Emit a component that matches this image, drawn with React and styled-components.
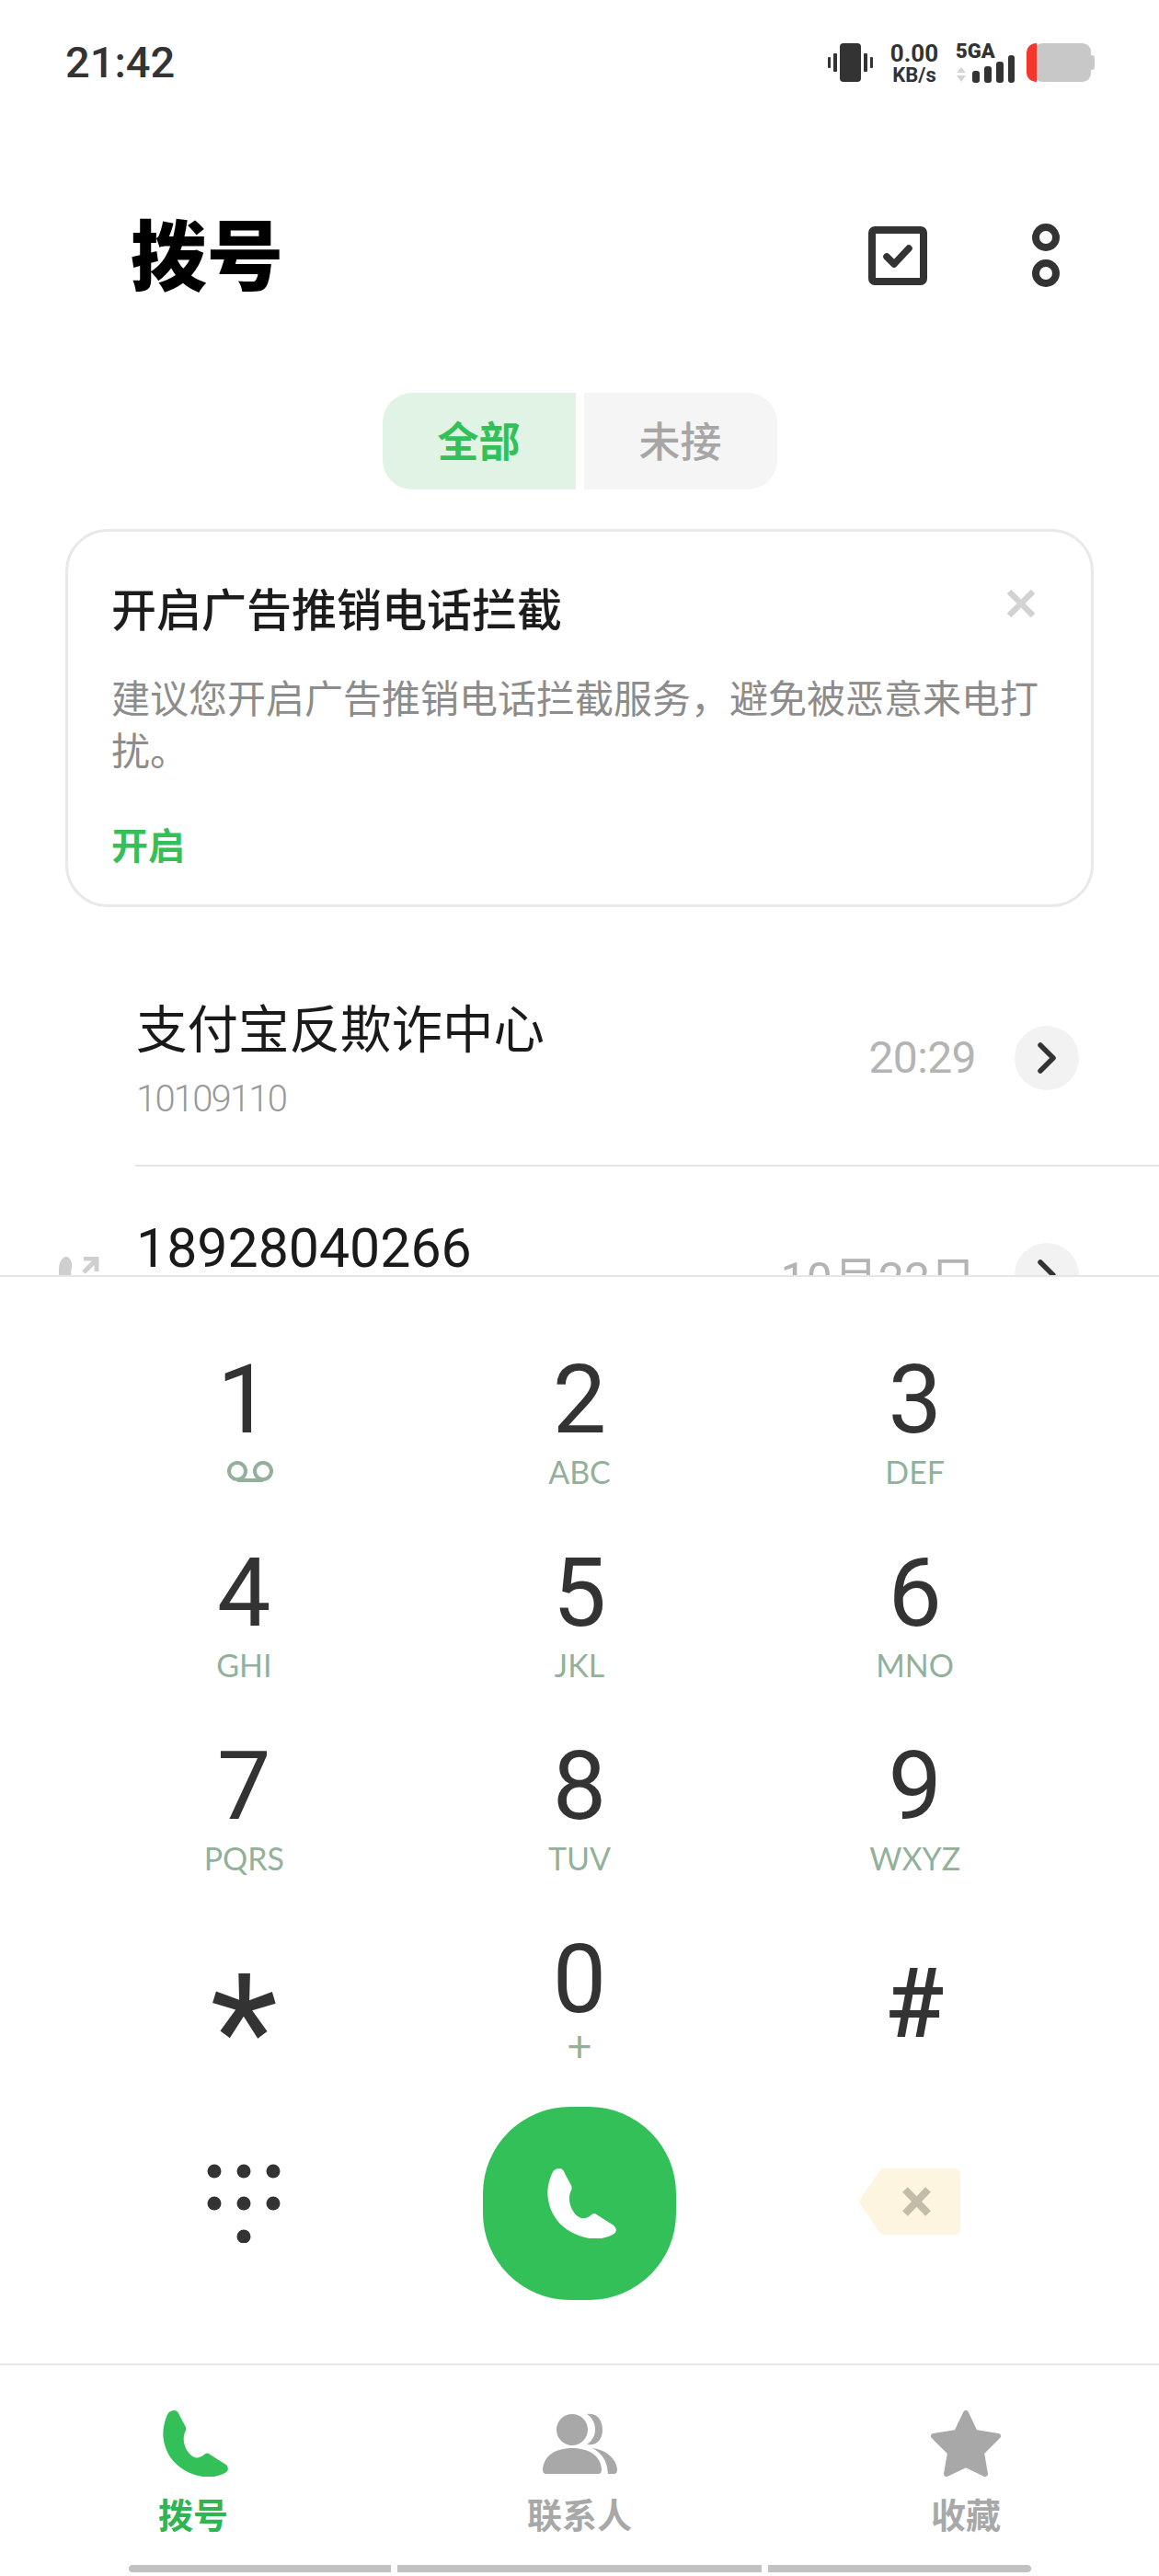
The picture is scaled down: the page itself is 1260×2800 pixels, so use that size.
import React from 'react';
import styled, { createGlobalStyle } from 'styled-components';

const GlobalStyle = createGlobalStyle`
  html, body {
    margin: 0;
    padding: 0;
    background: #fff;
  }
  body {
    font-family: 'Roboto', 'Noto Sans CJK SC', sans-serif;
  }
`;

const Page = styled.div`
  width: 1260px;
  height: 2800px;
  display: flex;
  flex-direction: column;
  overflow: hidden;
  background: #fff;
`;

const StatusBar = styled.div`
  height: 136px;
  flex: none;
  display: flex;
  justify-content: space-between;
  align-items: flex-start;
  padding: 47px 70px 0 71px;
  box-sizing: border-box;
`;

const Clock = styled.div`
  font-size: 47px;
  line-height: 42px;
  font-weight: 500;
  color: #333;
`;

const StatusIcons = styled.div`
  display: flex;
  align-items: flex-start;
`;

const Speed = styled.div`
  display: flex;
  flex-direction: column;
  align-items: center;
  margin: 0 18px;
  width: 54px;
  color: #333;
  font-weight: 700;
`;

const SpeedValue = styled.span`
  font-size: 26px;
  line-height: 22px;
`;

const SpeedUnit = styled.span`
  font-size: 22px;
  line-height: 20px;
  margin-top: 3px;
  white-space: nowrap;
`;

const Network = styled.div`
  display: flex;
  flex-direction: column;
  width: 64px;
  margin-right: 13px;
`;

const NetworkLabel = styled.span`
  font-size: 22px;
  line-height: 18px;
  font-weight: 900;
  color: #333;
  margin-bottom: -5px;
`;

const Header = styled.div`
  height: 120px;
  margin-top: 82px;
  flex: none;
  display: flex;
  align-items: center;
  justify-content: space-between;
  padding: 0 108px 0 142px;
`;

const Title = styled.h1`
  margin: 6px 0 0;
  font-size: 83px;
  line-height: 120px;
  font-weight: 900;
  color: #000;
`;

const HeaderActions = styled.div`
  display: flex;
  align-items: center;
  gap: 114px;
`;

const Tabs = styled.div`
  margin: 89px auto 0;
  display: flex;
  gap: 9px;
  flex: none;
`;

const Tab = styled.div`
  width: 210px;
  height: 105px;
  padding-bottom: 5px;
  display: flex;
  align-items: center;
  justify-content: center;
  box-sizing: border-box;
  font-size: 45px;
  background: ${p => (p.$active ? '#e0f3e5' : '#f5f5f5')};
  color: ${p => (p.$active ? '#34c059' : '#a6a6a6')};
  font-weight: ${p => (p.$active ? 700 : 500)};
  border-radius: ${p => (p.$active ? '32px 0 0 32px' : '0 32px 32px 0')};
`;

const Card = styled.section`
  margin: 43px 71px 0;
  height: 411px;
  flex: none;
  box-sizing: border-box;
  border: 3px solid #e9e9e9;
  border-radius: 46px;
  padding: 54px 60px 0 47px;
`;

const CardHead = styled.div`
  display: flex;
  justify-content: space-between;
  align-items: flex-start;
`;

const CardTitle = styled.div`
  font-size: 49px;
  line-height: 66px;
  font-weight: 500;
  color: #1c1c1c;
`;

const CloseSlot = styled.div`
  margin-top: 8px;
`;

const CardText = styled.p`
  margin: 34px -12px 0 0;
  font-size: 42px;
  line-height: 57px;
  color: #8c8c8c;
`;

const CardAction = styled.div`
  margin-top: 47px;
  font-size: 40px;
  line-height: 56px;
  font-weight: 700;
  color: #34c059;
`;

const CallList = styled.div`
  height: 400px;
  flex: none;
  overflow: hidden;
  padding-top: 40px;
  box-sizing: border-box;
`;

const CallRow = styled.div`
  display: flex;
  height: 242px;
`;

const Gutter = styled.div`
  width: 147px;
  flex: none;
  padding: 98px 0 0 64px;
  box-sizing: border-box;
`;

const RowBody = styled.div`
  flex: 1;
  display: flex;
  align-items: center;
  justify-content: space-between;
  padding: ${p => (p.$divider ? '7px 87px 0 1px' : '0 87px 7px 1px')};
  box-sizing: border-box;
  border-bottom: ${p => (p.$divider ? '2px solid #e6e6e6' : 'none')};
`;

const RowName = styled.div`
  margin-top: 6px;
  font-size: ${p => (p.$number ? '59px' : '55.5px')};
  line-height: 76px;
  font-weight: 400;
  color: #1a1a1a;
`;

const RowSub = styled.div`
  margin-top: 8px;
  height: 56px;
  font-size: 40px;
  line-height: 56px;
  font-weight: 300;
  color: #999;
  letter-spacing: -1.8px;
`;

const RowMeta = styled.div`
  display: flex;
  align-items: center;
  gap: 42px;
`;

const RowTime = styled.span`
  font-size: ${p => (p.$date ? '50px' : '48px')};
  font-weight: 400;
  color: #b4b4b4;
  letter-spacing: ${p => (p.$date ? '0' : '-0.6px')};
`;

const ChevronButton = styled.div`
  width: 70px;
  height: 70px;
  border-radius: 50%;
  background: #f2f2f2;
  display: flex;
  align-items: center;
  justify-content: center;
`;

const Dialer = styled.div`
  flex: 1;
  border-top: 2px solid #e6e6e6;
  padding: 84px 83px 0;
  box-sizing: border-box;
  background: #fff;
`;

const KeyGrid = styled.div`
  display: grid;
  grid-template-columns: repeat(3, 1fr);
  grid-auto-rows: 148px;
  row-gap: 62px;
`;

const Key = styled.div`
  display: flex;
  flex-direction: column;
  align-items: center;
`;

const Digit = styled.div`
  font-size: 104px;
  line-height: 100px;
  height: 100px;
  font-weight: 400;
  color: #333;
`;

const StarDigit = styled(Digit)`
  font-size: 170px;
  margin-top: 57px;
`;

const HashDigit = styled(Digit)`
  font-size: 106px;
  font-weight: 500;
  margin-top: 26px;
`;

const KeyLetters = styled.div`
  margin-top: 8px;
  font-family: 'Lato', sans-serif;
  font-size: 34px;
  line-height: 40px;
  height: 40px;
  color: #93b09b;
  display: flex;
  align-items: center;
`;

const VoicemailLetters = styled(KeyLetters)`
  padding-left: 14px;
`;

const PlusLetters = styled(KeyLetters)`
  margin-top: 8px;
  height: 26px;
  line-height: 26px;
  font-size: 48px;
  font-weight: 400;
`;

const ActionRow = styled.div`
  margin-top: 40px;
  display: grid;
  grid-template-columns: repeat(3, 1fr);
  align-items: center;
  justify-items: center;
`;

const BackspaceSlot = styled.div`
  margin-right: 11px;
`;

const CallButton = styled.div`
  width: 210px;
  height: 210px;
  padding-left: 6px;
  box-sizing: border-box;
  border-radius: 45%;
  background: #34c059;
  display: flex;
  align-items: center;
  justify-content: center;
`;

const BottomNav = styled.nav`
  flex: none;
  height: 231px;
  border-top: 2px solid #e6e6e6;
  box-sizing: border-box;
  display: flex;
  flex-direction: column;
  padding-top: 47px;
`;

const NavItems = styled.div`
  display: grid;
  grid-template-columns: repeat(3, 420px);
`;

const NavItem = styled.div`
  display: flex;
  flex-direction: column;
  align-items: center;
`;

const NavIcon = styled.div`
  height: 76px;
  display: flex;
  align-items: center;
  justify-content: center;
  padding-left: ${p => (p.$shift ? '5px' : '0')};
`;

const NavLabel = styled.span`
  margin-top: 15px;
  font-size: 38px;
  line-height: 52px;
  font-weight: 700;
  color: ${p => (p.$active ? '#2fb552' : '#a8a8a8')};
`;

const Gesture = styled.div`
  margin-top: auto;
  margin-bottom: 4px;
  display: flex;
  justify-content: center;
  gap: 7px;
`;

const GestureSegment = styled.div`
  width: ${p => p.$w}px;
  height: 8px;
  background: #c2c2c2;
  border-radius: ${p => p.$radius || '0'};
`;

const HANDSET = 'M13 0C16 0 18 3 19 6L26 19C27 22 26 24 25 26C21 36 27 50 35 54C39 56 43 55 47 52C50 49 52 49 54 51L73 63C76 66 76 70 73 72C67 76 55 79 46 77C26 74 3 60 0 31C-1 20 3 8 6 3C8 1 10 0 13 0Z';

const Handset = ({ size, color }) => (
  <svg width={size} height={size} viewBox="0 0 76 77">
    <path d={HANDSET} fill={color} />
  </svg>
);

const VibrateIcon = () => (
  <svg width="49" height="42" viewBox="0 0 49 42" fill="#333">
    <rect x="13" width="23" height="42" rx="4" />
    <rect x="6" y="11" width="4" height="20" rx="1" />
    <rect y="15" width="3" height="12" rx="1" />
    <rect x="39" y="11" width="4" height="20" rx="1" />
    <rect x="46" y="15" width="3" height="12" rx="1" />
  </svg>
);

const SignalIcon = () => (
  <svg width="64" height="30" viewBox="0 0 64 30">
    <path d="M6 13L11 19H1ZM6 29L1 22H11Z" fill="#d4d4d4" />
    <g fill="#333">
      <rect x="18" y="17" width="8" height="13" rx="3" />
      <rect x="31" y="12" width="8" height="18" rx="3" />
      <rect x="44" y="7" width="8" height="23" rx="3" />
      <rect x="57" y="0" width="7" height="30" rx="3" />
    </g>
  </svg>
);

const BatteryIcon = () => (
  <svg width="74" height="42" viewBox="0 0 74 42">
    <path d="M70 13h1a3 3 0 0 1 3 3v10a3 3 0 0 1-3 3h-1z" fill="#c8c8c8" />
    <rect x="8" width="62" height="42" rx="9" fill="#c8c8c8" />
    <path d="M11 0H10A10 10 0 0 0 0 10V32A10 10 0 0 0 10 42H11Z" fill="#f5362a" />
  </svg>
);

const SelectIcon = () => (
  <svg width="64" height="64" viewBox="0 0 64 64" fill="none" stroke="#333">
    <rect x="4" y="4" width="56" height="56" rx="3" strokeWidth="8" />
    <path d="M20 33L28 41L44 24" strokeWidth="7.5" strokeLinecap="round" strokeLinejoin="round" />
  </svg>
);

const MoreIcon = () => (
  <svg width="30" height="70" viewBox="0 0 30 70" fill="none" stroke="#333" strokeWidth="8">
    <circle cx="15" cy="15" r="11" />
    <circle cx="15" cy="54" r="11" />
  </svg>
);

const CloseIcon = () => (
  <svg width="32" height="32" viewBox="0 0 32 32" stroke="#d2d2d2" strokeWidth="6.5">
    <path d="M3 3L29 29M29 3L3 29" />
  </svg>
);

const ChevronIcon = () => (
  <svg width="22" height="34" viewBox="0 0 22 34" fill="none" stroke="#333" strokeWidth="5.5" strokeLinecap="round" strokeLinejoin="round">
    <path d="M4 3L18 17L4 31" />
  </svg>
);

const OutgoingIcon = () => (
  <svg width="44" height="44" viewBox="0 0 44 44">
    <path d="M8 0C12 0 15 6 14 12C13 15 13 18 14 22L6 44H0V14C0 6 4 0 8 0Z" fill="#cfcfcf" />
    <path d="M27 17L40 4M27 2H41V16" fill="none" stroke="#cfcfcf" strokeWidth="5" />
  </svg>
);

const VoicemailIcon = () => (
  <svg width="54" height="24" viewBox="0 0 54 24" fill="none" stroke="#93b09b" strokeWidth="4">
    <circle cx="13" cy="11" r="9" />
    <circle cx="41" cy="11" r="9" />
    <path d="M13 21H41" />
  </svg>
);

const DotsIcon = () => (
  <svg width="80" height="86" viewBox="0 0 80 86" fill="#333">
    <circle cx="8" cy="8" r="7.5" />
    <circle cx="40" cy="8" r="7.5" />
    <circle cx="72" cy="8" r="7.5" />
    <circle cx="8" cy="43" r="7.5" />
    <circle cx="40" cy="43" r="7.5" />
    <circle cx="72" cy="43" r="7.5" />
    <circle cx="40" cy="79" r="7.5" />
  </svg>
);

const BackspaceIcon = () => (
  <svg width="110" height="72" viewBox="0 0 110 72">
    <path d="M28 0H104A6 6 0 0 1 110 6V66A6 6 0 0 1 104 72H28C25 72 23 71 22 69L2 40C0 37 0 35 2 32L22 3C23 1 25 0 28 0Z" fill="#fdf5df" />
    <path d="M50 23L75 49M75 23L50 49" stroke="#c2bda9" strokeWidth="8" />
  </svg>
);

const ContactsIcon = () => (
  <svg width="81" height="66" viewBox="0 0 81 66" fill="#a8a8a8">
    <circle cx="32" cy="18" r="17" />
    <path d="M48 1C60-1 65 9 65 18C65 27 60 36 48 34C54 30 57 24 57 18C57 11 54 5 48 1Z" />
    <path d="M4 66C1 66 0 64 0 61C1 47 13 38 32 38C51 38 63 47 64 61C64 64 63 66 60 66Z" />
    <path d="M54 38C70 40 80 50 81 61C81 64 80 66 77 66H71C70 52 65 44 54 38Z" />
  </svg>
);

const StarIcon = () => (
  <svg width="78" height="74" viewBox="0 0 78 74">
    <path d="M39 4L49 25L74 29L56 47L60 70L39 60L18 70L22 47L4 29L29 25Z" fill="#a8a8a8" stroke="#a8a8a8" strokeWidth="6" strokeLinejoin="round" />
  </svg>
);

const KEYS = [
  ['2', 'ABC'],
  ['3', 'DEF'],
  ['4', 'GHI'],
  ['5', 'JKL'],
  ['6', 'MNO'],
  ['7', 'PQRS'],
  ['8', 'TUV'],
  ['9', 'WXYZ'],
];

export default function App() {
  return (
    <Page>
      <GlobalStyle />
      <StatusBar>
        <Clock>21:42</Clock>
        <StatusIcons>
          <VibrateIcon />
          <Speed>
            <SpeedValue>0.00</SpeedValue>
            <SpeedUnit>KB/s</SpeedUnit>
          </Speed>
          <Network>
            <NetworkLabel>5GA</NetworkLabel>
            <SignalIcon />
          </Network>
          <BatteryIcon />
        </StatusIcons>
      </StatusBar>

      <Header>
        <Title>拨号</Title>
        <HeaderActions>
          <SelectIcon />
          <MoreIcon />
        </HeaderActions>
      </Header>

      <Tabs>
        <Tab $active>全部</Tab>
        <Tab>未接</Tab>
      </Tabs>

      <Card>
        <CardHead>
          <CardTitle>开启广告推销电话拦截</CardTitle>
          <CloseSlot><CloseIcon /></CloseSlot>
        </CardHead>
        <CardText>建议您开启广告推销电话拦截服务，避免被恶意来电打扰。</CardText>
        <CardAction>开启</CardAction>
      </Card>

      <CallList>
        <CallRow>
          <Gutter />
          <RowBody $divider>
            <div>
              <RowName>支付宝反欺诈中心</RowName>
              <RowSub>10109110</RowSub>
            </div>
            <RowMeta>
              <RowTime>20:29</RowTime>
              <ChevronButton><ChevronIcon /></ChevronButton>
            </RowMeta>
          </RowBody>
        </CallRow>
        <CallRow>
          <Gutter><OutgoingIcon /></Gutter>
          <RowBody>
            <div>
              <RowName $number>18928040266</RowName>
              <RowSub />
            </div>
            <RowMeta>
              <RowTime $date>10月22日</RowTime>
              <ChevronButton><ChevronIcon /></ChevronButton>
            </RowMeta>
          </RowBody>
        </CallRow>
      </CallList>

      <Dialer>
        <KeyGrid>
          <Key>
            <Digit>1</Digit>
            <VoicemailLetters><VoicemailIcon /></VoicemailLetters>
          </Key>
          {KEYS.map(([digit, letters]) => (
            <Key key={digit}>
              <Digit>{digit}</Digit>
              <KeyLetters>{letters}</KeyLetters>
            </Key>
          ))}
          <Key><StarDigit>*</StarDigit></Key>
          <Key>
            <Digit>0</Digit>
            <PlusLetters>+</PlusLetters>
          </Key>
          <Key><HashDigit>#</HashDigit></Key>
        </KeyGrid>
        <ActionRow>
          <DotsIcon />
          <CallButton><Handset size={76} color="#fff" /></CallButton>
          <BackspaceSlot><BackspaceIcon /></BackspaceSlot>
        </ActionRow>
      </Dialer>

      <BottomNav>
        <NavItems>
          <NavItem>
            <NavIcon $shift><Handset size={72} color="#34c059" /></NavIcon>
            <NavLabel $active>拨号</NavLabel>
          </NavItem>
          <NavItem>
            <NavIcon><ContactsIcon /></NavIcon>
            <NavLabel>联系人</NavLabel>
          </NavItem>
          <NavItem>
            <NavIcon><StarIcon /></NavIcon>
            <NavLabel>收藏</NavLabel>
          </NavItem>
        </NavItems>
        <Gesture>
          <GestureSegment $w={285} $radius="4px 0 0 4px" />
          <GestureSegment $w={396} />
          <GestureSegment $w={286} $radius="0 4px 4px 0" />
        </Gesture>
      </BottomNav>
    </Page>
  );
}
